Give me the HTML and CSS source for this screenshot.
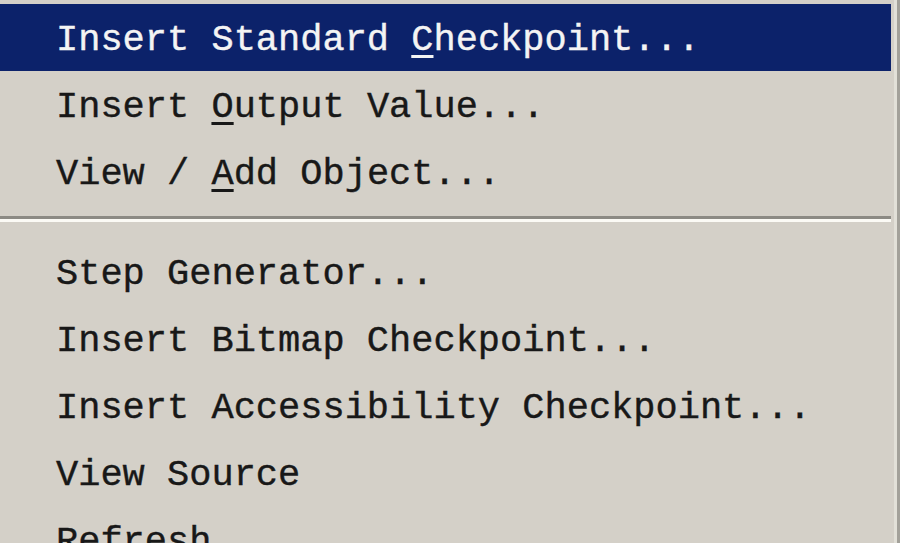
FILE: index.html
```html
<!DOCTYPE html>
<html lang="en">
<head>
  <meta charset="UTF-8" />
  <title>Context Menu</title>
  <link rel="stylesheet" href="styles.css">
</head>
<body>

  <!-- Context menu -->
  <div class="menu">
    <div class="item active">Insert Standard <u>C</u>heckpoint...</div>
    <div class="item">Insert <u>O</u>utput Value...</div>
    <div class="item">View / <u>A</u>dd Object...</div>
    <div class="sep"></div>
    <div class="item">Step Generator...</div>
    <div class="item">Insert Bitmap Checkpoint...</div>
    <div class="item">Insert Accessibility Checkpoint...</div>
    <div class="item">View Source</div>
    <div class="item">Refresh</div>
  </div>

</body>
</html>
```

FILE: styles.css
```css
* { margin: 0; padding: 0; box-sizing: border-box; }
body {
  background: #d4d0c8;
  font-family: "Liberation Mono", monospace;
  overflow: hidden;
  height: 543px;
}

.menu {
  width: 900px;
  padding: 4px 6px 0 0;
  border-right: 3px solid #a3a19a;
  box-shadow: inset -3px 0 0 #e2e0d8;
  background: #d4d0c8;
}

.item {
  height: 67px;
  padding: 5px 0 0 56px;
  line-height: 62px;
  font-size: 37px;
  color: #181818;
  white-space: nowrap;
  -webkit-text-stroke: 0.4px #181818;
}

.item u {
  text-decoration-thickness: 3px;
  text-underline-offset: 5px;
}

.item.active {
  background: #0c226a;
  color: #f4f4f4;
  -webkit-text-stroke: 0.4px #f4f4f4;
}

/* separator line */
.sep {
  height: 33px;
  padding-top: 11px;
}
.sep::before {
  content: "";
  display: block;
  height: 3px;
  background: #8c8a84;
  border-bottom: 3px solid #fbfaf5;
  box-sizing: content-box;
}
```
